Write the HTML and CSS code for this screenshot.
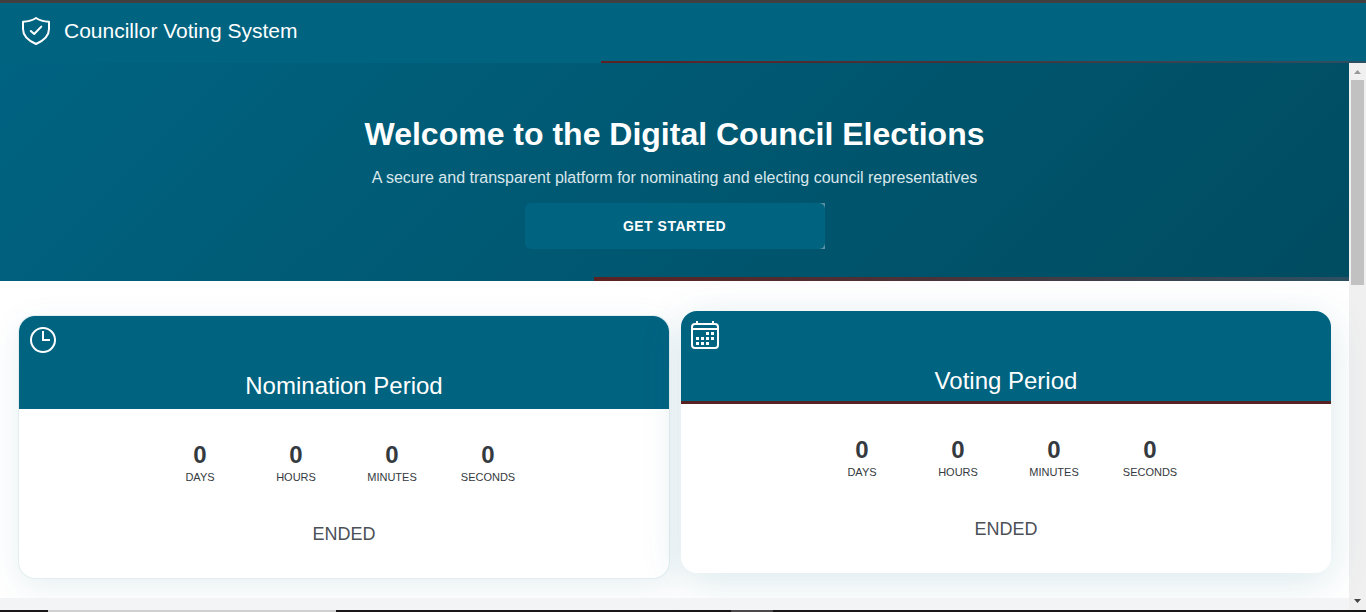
FILE: index.html
```html
<!DOCTYPE html>
<html lang="en">
<head>
<meta charset="utf-8">
<title>Councillor Voting System</title>
<meta name="viewport" content="width=device-width, initial-scale=1">
<link rel="stylesheet" href="styles.css">
</head>
<body>
<div class="window">
  <header class="topbar">
    <svg class="icon" viewBox="0 0 28 28" fill="none" stroke="currentColor" stroke-width="2" stroke-linecap="round" stroke-linejoin="round" aria-hidden="true">
      <path d="M14 1C10.500 3.400 6 4.500 1 4.800V12C1 19 6 23.500 14 27C22 23.500 27 19 27 12V4.800C22 4.500 17.500 3.400 14 1Z"/>
      <path d="M8.800 14L12.200 17L19.300 9.600"/>
    </svg>
    <span class="brand">Councillor Voting System</span>
  </header>

  <div class="viewport">
    <div class="page">
      <section class="hero">
        <h1 class="hero-title">Welcome to the Digital Council Elections</h1>
        <p class="hero-text">A secure and transparent platform for nominating and electing council representatives</p>
        <div class="button-frame"><button class="start" type="button">GET STARTED</button></div>
      </section>

      <main class="periods">
        <section class="card">
          <div class="card-head">
            <svg class="icon" viewBox="0 0 28 28" fill="none" stroke="currentColor" stroke-width="2" aria-hidden="true">
              <circle cx="14" cy="14" r="12"/>
              <path d="M14 5V14H21"/>
            </svg>
            <h2 class="card-title">Nomination Period</h2>
          </div>
          <div class="card-body">
            <div class="countdown">
              <div class="unit"><span class="value">0</span><span class="label">DAYS</span></div>
              <div class="unit"><span class="value">0</span><span class="label">HOURS</span></div>
              <div class="unit"><span class="value">0</span><span class="label">MINUTES</span></div>
              <div class="unit"><span class="value">0</span><span class="label">SECONDS</span></div>
            </div>
            <p class="status">ENDED</p>
          </div>
        </section>

        <section class="card card-raised">
          <div class="card-head">
            <svg class="icon" viewBox="0 0 28 28" fill="none" stroke="currentColor" stroke-width="2" aria-hidden="true">
              <rect x="1" y="3" width="26" height="24" rx="3"/>
              <path d="M6 0V3M22 0V3M1 8H27"/>
              <path stroke-width="3" stroke-dasharray="3 2" d="M15 12.500H23M5 17.500H23M5 22.500H18"/>
            </svg>
            <h2 class="card-title">Voting Period</h2>
          </div>
          <div class="card-body">
            <div class="countdown">
              <div class="unit"><span class="value">0</span><span class="label">DAYS</span></div>
              <div class="unit"><span class="value">0</span><span class="label">HOURS</span></div>
              <div class="unit"><span class="value">0</span><span class="label">MINUTES</span></div>
              <div class="unit"><span class="value">0</span><span class="label">SECONDS</span></div>
            </div>
            <p class="status">ENDED</p>
          </div>
        </section>
      </main>
      <div class="page-end"></div>
    </div>

    <div class="scrollbar" aria-hidden="true">
      <svg class="arrow arrow-up" viewBox="0 0 17 17"><path d="M5 11H12L8.500 7Z"/></svg>
      <div class="thumb"></div>
      <svg class="arrow" viewBox="0 0 17 17"><path d="M5 6H12L8.500 10Z"/></svg>
    </div>
  </div>
  <div class="taskbar"><span class="task"></span><span class="task task-dim"></span></div>
</div>
</body>
</html>
```
FILE: styles.css
```css
* {
  box-sizing: border-box;
}

body {
  margin: 0;
  font-family: "Liberation Sans", Arial, sans-serif;
  color: #343a40;
  background: #fff;
}

h1, h2, p {
  margin: 0;
}

.window {
  display: flex;
  flex-direction: column;
  min-height: 100vh;
}

.topbar {
  position: relative;
  display: flex;
  align-items: center;
  gap: 14px;
  padding: 13px 22px 17px;
  border-top: 3px solid #404040;
  background: #006380;
  color: #fff;
}

.topbar::after,
.hero::after {
  content: "";
  position: absolute;
  right: 0;
  bottom: 0;
  width: 56%;
  height: 2px;
  background: linear-gradient(90deg, #5c2222, #4a3338 45%, #2c5062);
}

.icon {
  display: block;
  width: 28px;
  height: 28px;
  flex: none;
}

.brand {
  font-size: 21px;
  line-height: 30px;
}

.viewport {
  display: flex;
  flex: 1;
}

.page {
  display: flex;
  flex: 1;
  flex-direction: column;
  min-width: 0;
}

.hero {
  position: relative;
  z-index: 1;
  display: flex;
  flex-direction: column;
  align-items: center;
  padding: 51px 20px 32px;
  background: linear-gradient(135deg, #006381, #004c61);
  color: #fff;
  text-align: center;
}

.hero::after {
  height: 4px;
}

.hero-title {
  font-size: 32px;
  line-height: 40px;
}

.hero-text {
  margin: 12px 0 14px;
  font-size: 16px;
  line-height: 23px;
  color: #d9e7ec;
}

.button-frame {
  width: 300px;
  max-width: 100%;
  background: linear-gradient(90deg, transparent 95%, #5e91a1 95%);
}

.start {
  display: block;
  width: 100%;
  padding: 15px 20px;
  border: 0;
  border-radius: 6px;
  background: #006380;
  color: #fff;
  font: bold 14px/16px "Liberation Sans", Arial, sans-serif;
  letter-spacing: 0.5px;
}

.periods {
  display: flex;
  gap: 12px;
  padding: 35px 18px 20px 19px;
}

.card {
  flex: 1;
  border-radius: 16px;
  background: #fff;
  box-shadow: 0 0 0 1px #e1edf0, 0 8px 32px rgba(0, 99, 128, 0.1);
}

.card-raised {
  transform: translateY(-5px);
  box-shadow: 0 8px 40px rgba(0, 99, 128, 0.15);
}

.card-head {
  display: flex;
  flex-direction: column;
  gap: 18px;
  height: 93px;
  padding: 10px;
  border-radius: 16px 16px 0 0;
  background: #006380;
  color: #fff;
}

.card-raised .card-head {
  border-bottom: 3px solid #562322;
}

.card-title {
  font-size: 24px;
  font-weight: 400;
  line-height: 28px;
  text-align: center;
}

.card-body {
  padding: 33px 20px;
}

.countdown {
  display: flex;
  justify-content: center;
}

.unit {
  display: flex;
  flex-direction: column;
  align-items: center;
  gap: 1px;
  width: 96px;
}

.value {
  font-size: 24px;
  font-weight: 700;
  line-height: 26px;
}

.label {
  font-size: 11px;
  line-height: 16px;
}

.status {
  margin-top: 39px;
  font-size: 18px;
  line-height: 21px;
  text-align: center;
  color: #4c5157;
}

.page-end {
  flex: 1;
  background: rgba(240, 241, 244, 0.8);
  position: relative;
}

.scrollbar {
  display: flex;
  flex-direction: column;
  width: 17px;
  background: #f0f0f0;
}

.arrow {
  width: 17px;
  height: 17px;
  margin-top: auto;
  fill: #444;
}

.arrow-up {
  margin-top: 0;
  fill: #999;
}

.thumb {
  height: 205px;
  margin: 0 2px;
  background: #c1c1c1;
}

.taskbar {
  display: flex;
  gap: 30%;
  height: 2px;
  padding-left: 48px;
  background: #1a1718;
}

.task {
  width: 288px;
  background: #d0cfcf;
}

.task-dim {
  width: 42px;
  background: #4c494a;
}
```
